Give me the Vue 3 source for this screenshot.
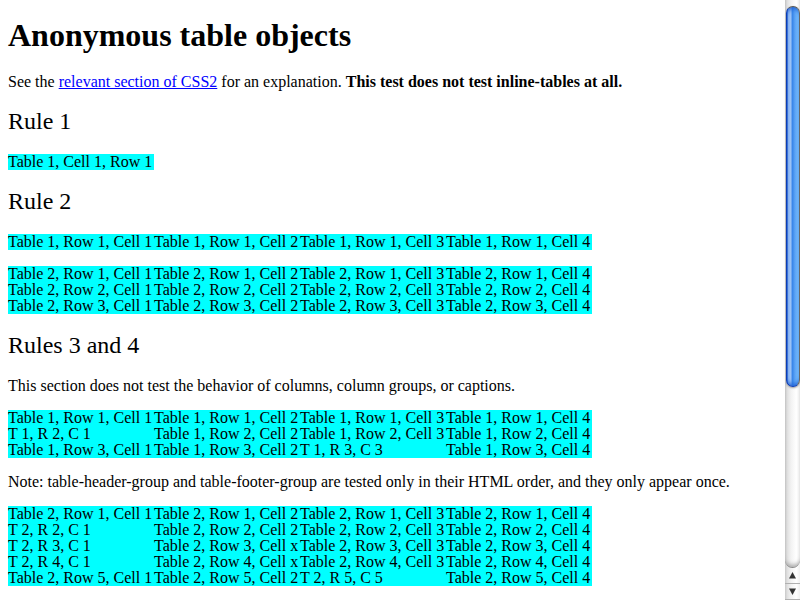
<script setup>
const cell = (t, r, c) => `Table ${t}, Row ${r}, Cell ${c}`
const row = (t, r, overrides = {}) =>
  [1, 2, 3, 4].map((c) => overrides[c] ?? cell(t, r, c))

const rule1 = [['Table 1, Cell 1, Row 1']]
const rule2 = [
  [row(1, 1)],
  [row(2, 1), row(2, 2), row(2, 3)],
]
const rule3 = [
  row(1, 1),
  row(1, 2, { 1: 'T 1, R 2, C 1' }),
  row(1, 3, { 3: 'T 1, R 3, C 3' }),
]
const rule4 = [
  row(2, 1),
  row(2, 2, { 1: 'T 2, R 2, C 1' }),
  row(2, 3, { 1: 'T 2, R 3, C 1', 2: cell(2, 3, 'x') }),
  row(2, 4, { 1: 'T 2, R 4, C 1', 2: cell(2, 4, 'x') }),
  row(2, 5, { 3: 'T 2, R 5, C 5' }),
]
</script>

<template>
  <div class="window">
    <main class="page">
      <h1>Anonymous table objects</h1>
      <p>
        See the <a href="#rules">relevant section of CSS2</a> for an explanation.
        <strong>This test does not test inline-tables at all.</strong>
      </p>

      <h2 id="rules">Rule 1</h2>
      <table>
        <tbody>
          <tr v-for="(cells, i) in rule1" :key="i">
            <td v-for="(text, j) in cells" :key="j">{{ text }}</td>
          </tr>
        </tbody>
      </table>

      <h2>Rule 2</h2>
      <table v-for="(rows, n) in rule2" :key="n">
        <tbody>
          <tr v-for="(cells, i) in rows" :key="i">
            <td v-for="(text, j) in cells" :key="j">{{ text }}</td>
          </tr>
        </tbody>
      </table>

      <h2>Rules 3 and 4</h2>
      <p>This section does not test the behavior of columns, column groups, or captions.</p>
      <table>
        <tbody>
          <tr v-for="(cells, i) in rule3" :key="i">
            <td v-for="(text, j) in cells" :key="j">{{ text }}</td>
          </tr>
        </tbody>
      </table>
      <p>Note: table-header-group and table-footer-group are tested only in their HTML order, and they only appear once.</p>
      <table>
        <tbody>
          <tr v-for="(cells, i) in rule4" :key="i">
            <td v-for="(text, j) in cells" :key="j">{{ text }}</td>
          </tr>
        </tbody>
      </table>
    </main>

    <div class="scrollbar">
      <div class="track">
        <div class="thumb"></div>
      </div>
      <button type="button" aria-label="Scroll up">
        <svg width="15" height="16" viewBox="0 0 15 16"><path d="M7.5 4 L11 10.5 H4 Z" fill="#333" /></svg>
      </button>
      <button type="button" aria-label="Scroll down">
        <svg width="15" height="16" viewBox="0 0 15 16"><path d="M4 4.5 H11 L7.5 11 Z" fill="#333" /></svg>
      </button>
    </div>
  </div>
</template>

<style>
body {
  margin: 0;
  background: #fff;
}
</style>

<style scoped>
.window {
  display: flex;
  height: 100vh;
  overflow: hidden;
  color: #000;
  font-family: "Liberation Serif", "Times New Roman", serif;
  font-size: 16px;
  line-height: 16px;
}

.page {
  flex: 1;
  min-width: 0;
  padding: 0 8px;
  overflow: hidden;
}

h1 {
  margin: 19px 0 23px;
  font-size: 32px;
  line-height: 32px;
}

h2 {
  margin: 19px 0 21px;
  font-size: 24px;
  font-weight: normal;
  line-height: 24px;
}

p {
  margin: 16px 0;
}

a {
  color: #00f;
  text-decoration: underline;
}

table {
  margin: 16px 0;
  border-collapse: collapse;
  background: #0ff;
}

td {
  width: 146px;
  padding: 0;
  white-space: nowrap;
}

.scrollbar {
  display: flex;
  flex: none;
  flex-direction: column;
  width: 15px;
  background: linear-gradient(to right, #c8c8c8, #e0e0e0 15%, #f2f2f2 40%, #fff 75%, #f0f0f0);
}

.track {
  flex: 1;
  box-sizing: border-box;
  padding: 6px 0 0 1px;
  border-bottom: 1px solid #888;
  border-radius: 0 0 8px 8px;
  box-shadow: inset 0 -4px 4px -2px #aaa;
}

.thumb {
  box-sizing: border-box;
  height: 68%;
  border: 1px solid #0c3cb4;
  border-top-color: #555;
  border-right-color: #666;
  border-radius: 7px;
  background: linear-gradient(to right, #1650c8, #94bcf4 12%, #9cc4f6 34%, #3482e8 42%, #5aa2f4 66%, #80c8ff);
  box-shadow: inset 0 4px 4px -2px #2668d8, inset 0 -4px 4px -2px #2668d8, 0 1px 2px #999;
}

button {
  flex: none;
  height: 16px;
  padding: 0;
  border: 0;
  border-bottom: 1px solid #b0b0b0;
  background: transparent;
}

svg {
  display: block;
}
</style>
